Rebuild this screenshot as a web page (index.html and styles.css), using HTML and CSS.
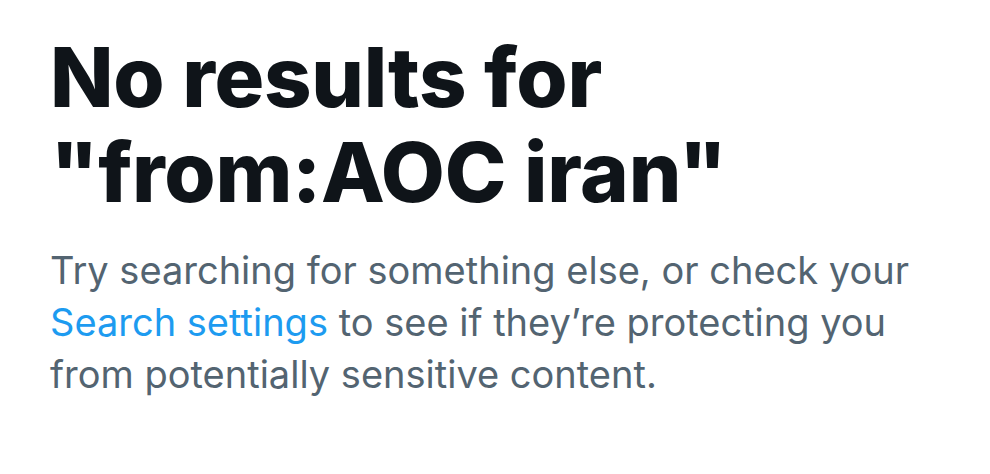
FILE: index.html
```html
<!DOCTYPE html>
<html>
<head>
<meta charset="utf-8">
<link rel="stylesheet" href="styles.css">
</head>
<body>
<main class="empty">
  <h1 class="title">No results for<br>"from:AOC iran"</h1>
  <p class="desc">Try searching for something else, or check your <a class="link" href="#">Search settings</a> to see if they’re protecting you from potentially sensitive content.</p>
</main>
</body>
</html>
```
FILE: styles.css
```css
html, body {
  margin: 0;
  padding: 0;
  background: #ffffff;
}
.empty {
  padding: 30px 40px 0 50px;
  width: 880px;
}
.title {
  margin: 0;
  font-family: Inter, "Liberation Sans", sans-serif;
  font-weight: 800;
  font-size: 83px;
  line-height: 95px;
  letter-spacing: -0.3px;
  color: #0f1419;
}
.desc {
  margin: 24px 0 0 0;
  font-family: Inter, "Liberation Sans", sans-serif;
  font-weight: 400;
  font-size: 38px;
  line-height: 52px;
  color: #536471;
}
.link {
  color: #1d9bf0;
  text-decoration: none;
}
```
